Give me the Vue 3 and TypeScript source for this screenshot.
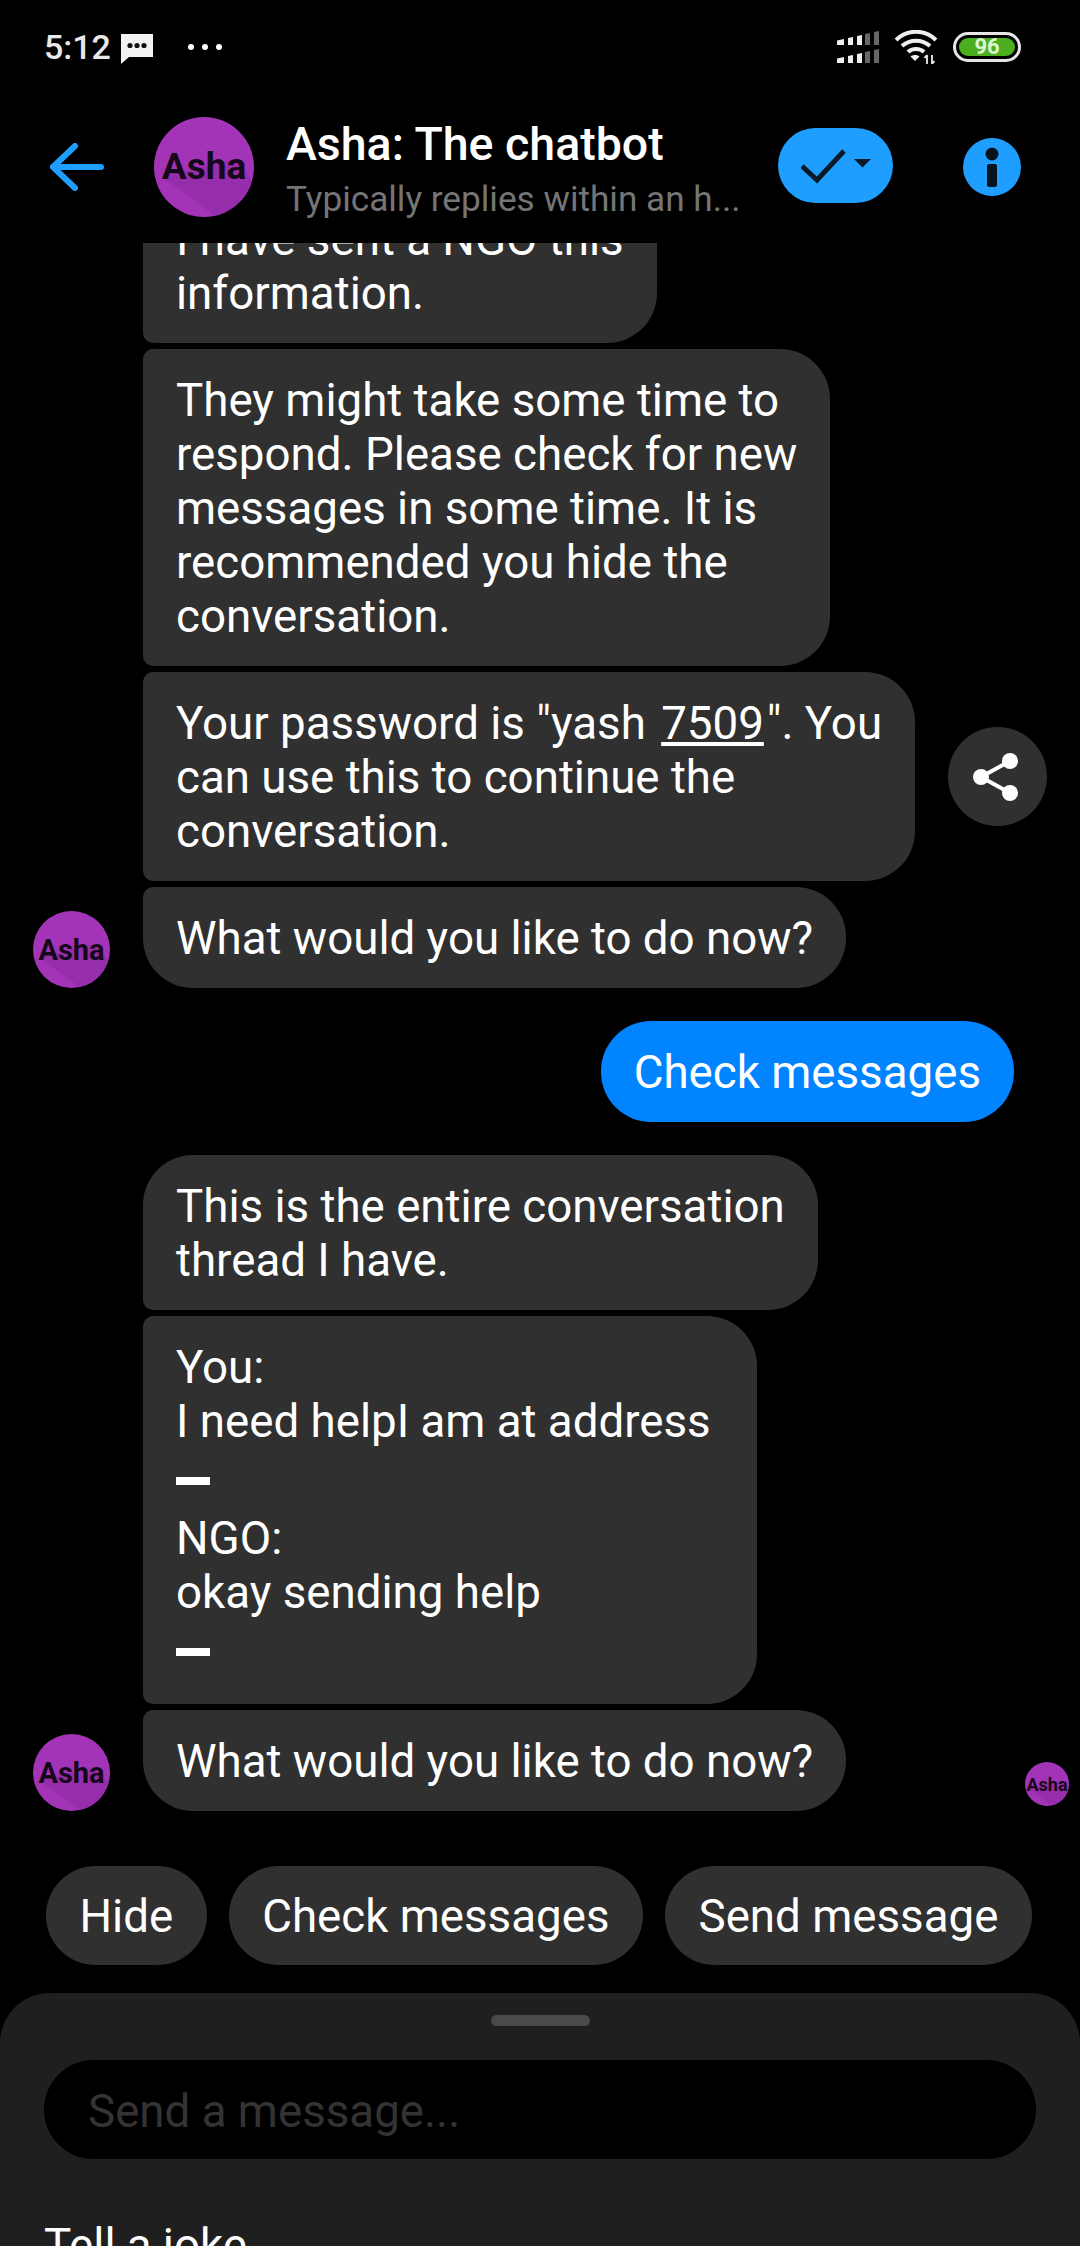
<template>
  <div class="phone">
    <div class="status-bar">
      <div class="status-left">
        <span class="time">5:12</span>
        <svg class="sms" width="34" height="31" viewBox="0 0 34 31">
          <path d="M1 1h32v23H9l-8 7z" fill="#f2f2f2" />
          <circle cx="10" cy="12.5" r="2.6" fill="#111" />
          <circle cx="17" cy="12.5" r="2.6" fill="#111" />
          <circle cx="24" cy="12.5" r="2.6" fill="#111" />
        </svg>
        <span class="more"><i></i><i></i><i></i></span>
      </div>
      <div class="status-right">
        <svg width="42" height="32" viewBox="0 0 42 32">
          <g v-for="row in [0, 18]" :key="row" :transform="`translate(0 ${row})`">
            <path d="M0 9.5l7-1.500V14H0z" fill="#eee" />
            <path d="M11 7l5-1v8h-5z" fill="#eee" />
            <path d="M20 5l5-1v10h-5z" fill="#eee" />
            <path d="M28 3l5-1v12h-5z" fill="#666" />
            <path d="M37 1l5-1v14h-5z" fill="#666" />
          </g>
        </svg>
        <svg class="wifi" width="44" height="34" viewBox="0 0 44 34" fill="none" stroke="#eee" stroke-width="4">
          <path d="M2 10c11-11 29-11 40 0" />
          <path d="M8 16c8-7 20-7 28 0" />
          <path d="M14 22c4-4 12-4 16 0" />
          <path d="M21 31l-4.500-4.500c2.500-2 6.500-2 9 0z" fill="#eee" stroke="none" />
          <path d="M33 25v9M30.500 28l2.500-3M38 34v-9M40.500 31L38 34" stroke-width="1.800" />
        </svg>
        <div class="battery"><span>96</span></div>
      </div>
    </div>

    <header class="top-bar">
      <svg class="back" width="54" height="48" viewBox="0 0 54 48" fill="none" stroke="#1e9fff" stroke-width="6" stroke-linecap="round" stroke-linejoin="round">
        <path d="M25 3L3 24l22 21M3 24h48" />
      </svg>
      <div class="avatar large"><span>Asha</span></div>
      <div class="titles">
        <div class="title">Asha: The chatbot</div>
        <div class="subtitle">Typically replies within an h...</div>
      </div>
      <div class="check-pill">
        <svg width="70" height="36" viewBox="0 0 70 36" fill="none">
          <path d="M1 18l15 14L43 3" stroke="#0b1a26" stroke-width="5" />
          <path d="M53 11h17l-8.500 8.500z" fill="#0b1a26" />
        </svg>
      </div>
      <svg class="info" width="58" height="58" viewBox="0 0 58 58">
        <circle cx="29" cy="29" r="29" fill="#1e9fff" />
        <circle cx="29" cy="16" r="6.500" fill="#06131d" />
        <rect x="24" y="26" width="10" height="23" rx="2" fill="#06131d" />
      </svg>
    </header>

    <div class="messages">
      <div
        v-for="msg in messages"
        :key="msg.id"
        class="row"
        :class="[msg.mine ? 'mine' : '', msg.gap ? 'gap' : '']"
      >
        <div v-if="msg.avatar" class="avatar medium"><span>Asha</span></div>
        <div
          class="bubble"
          :class="[msg.pos, msg.mine ? 'blue' : '']"
        >
          <template v-for="(part, i) in msg.parts" :key="i">
            <u v-if="part.link">{{ part.text }}</u>
            <b v-else-if="part.dash" class="dash"></b>
            <template v-else>{{ part.text }}</template>
          </template>
        </div>
        <div v-if="msg.share" class="share">
          <svg width="50" height="50" viewBox="0 0 50 50" fill="none">
            <path d="M37 9L8 25l29 16" stroke="#fff" stroke-width="4" />
            <circle cx="37" cy="9" r="8" fill="#fff" />
            <circle cx="8" cy="25" r="8" fill="#fff" />
            <circle cx="37" cy="41" r="8" fill="#fff" />
          </svg>
        </div>
        <div v-if="msg.seen" class="avatar small"><span>Asha</span></div>
      </div>
    </div>

    <div class="quick-replies">
      <div v-for="q in quickReplies" :key="q" class="chip">{{ q }}</div>
    </div>

    <div class="sheet">
      <div class="handle"></div>
      <div class="input">Send a message...</div>
      <div class="suggestion">Tell a joke</div>
    </div>
  </div>
</template>

<script setup lang="ts">
interface Part {
  text?: string
  link?: boolean
  dash?: boolean
}

interface Message {
  id: number
  parts: Part[]
  pos?: string
  mine?: boolean
  gap?: boolean
  avatar?: boolean
  share?: boolean
  seen?: boolean
}

const messages: Message[] = [
  { id: 1, pos: 'mid', parts: [{ text: 'I have sent a NGO this\ninformation.' }] },
  {
    id: 2,
    pos: 'mid',
    parts: [{ text: 'They might take some time to\nrespond. Please check for new\nmessages in some time. It is\nrecommended you hide the\nconversation.' }]
  },
  {
    id: 3,
    pos: 'mid',
    share: true,
    parts: [
      { text: 'Your password is "yash ' },
      { text: '7509', link: true },
      { text: '". You\ncan use this to continue the\nconversation.' }
    ]
  },
  { id: 4, pos: 'last', avatar: true, parts: [{ text: 'What would you like to do now?' }] },
  { id: 5, mine: true, gap: true, parts: [{ text: 'Check messages' }] },
  { id: 6, pos: 'first', gap: true, parts: [{ text: 'This is the entire conversation\nthread I have.' }] },
  {
    id: 7,
    pos: 'mid thread',
    parts: [
      { text: 'You:\nI need helpI am at address\n' },
      { dash: true },
      { text: 'NGO:\nokay sending help\n' },
      { dash: true }
    ]
  },
  { id: 8, pos: 'last', avatar: true, seen: true, parts: [{ text: 'What would you like to do now?' }] }
]

const quickReplies = ['Hide', 'Check messages', 'Send message']
</script>

<style>
html,
body {
  margin: 0;
  background: #000;
}
</style>

<style scoped>
.phone {
  width: 1080px;
  height: 2246px;
  overflow: hidden;
  display: flex;
  flex-direction: column;
  background: #000;
  color: #fff;
  font-family: Roboto, "Noto Sans", sans-serif;
}

.status-bar {
  height: 90px;
  flex: none;
  display: flex;
  justify-content: space-between;
  align-items: center;
  padding: 4px 59px 0 44px;
  box-sizing: border-box;
}

.status-left,
.status-right {
  display: flex;
  align-items: center;
}

.time {
  font-size: 34px;
  font-weight: 500;
  color: #e8e8e8;
}

.sms {
  margin-left: 9px;
  margin-top: 3px;
}

.more {
  display: flex;
  gap: 8px;
  margin-left: 34px;
}

.more i {
  width: 6px;
  height: 6px;
  border-radius: 50%;
  background: #fff;
}

.wifi {
  margin-left: 15px;
}

.battery {
  width: 68px;
  height: 30px;
  margin-left: 15px;
  box-sizing: border-box;
  border: 3px solid #e6e6e6;
  border-radius: 15px;
  padding: 3px;
  display: flex;
}

.battery span {
  flex: 1;
  border-radius: 9px;
  background: #4caf1f;
  color: #dcf7cf;
  font-size: 22px;
  font-weight: 700;
  line-height: 18px;
  text-align: center;
}

.top-bar {
  height: 153px;
  flex: none;
  display: flex;
  align-items: center;
  padding: 0 59px 0 50px;
  box-sizing: border-box;
  background: #000;
}

.back {
  flex: none;
  margin-right: 50px;
}

.titles {
  flex: 1;
  margin-left: 32px;
  padding-top: 7px;
  min-width: 0;
}

.title {
  font-size: 46.5px;
  font-weight: 500;
  line-height: 54px;
}

.subtitle {
  margin-top: 3px;
  font-size: 35.2px;
  line-height: 50px;
  color: #757575;
  white-space: nowrap;
}

.check-pill {
  width: 115px;
  height: 75px;
  border-radius: 38px;
  background: #1e9fff;
  display: flex;
  align-items: center;
  justify-content: center;
  margin-right: 70px;
  margin-bottom: 2px;
}

.info {
  flex: none;
}

.avatar {
  flex: none;
  position: relative;
  overflow: hidden;
  border-radius: 50%;
  background: #a334b8;
  display: flex;
  align-items: center;
  justify-content: center;
  color: #16081b;
  font-weight: 700;
}

.avatar::before {
  content: "";
  position: absolute;
  inset: 0;
  background: #962dab;
  clip-path: polygon(8% 60%, 84% 42%, 100% 70%, 100% 100%, 62% 100%);
}

.avatar span {
  position: relative;
}

.avatar.large {
  width: 100px;
  height: 100px;
  font-size: 37px;
}

.avatar.medium {
  width: 77px;
  height: 77px;
  font-size: 29px;
  margin-right: 33px;
  align-self: flex-end;
}

.avatar.small {
  width: 44px;
  height: 44px;
  font-size: 18px;
  margin-left: auto;
  margin-right: 11px;
  align-self: flex-end;
  margin-bottom: 5px;
}

.messages {
  flex: 1;
  min-height: 0;
  overflow: hidden;
  display: flex;
  flex-direction: column;
  justify-content: flex-end;
  gap: 6px;
}

.row {
  flex: none;
  display: flex;
  align-items: center;
  padding-left: 143px;
}

.row:has(> .avatar.medium) {
  padding-left: 33px;
}

.row.mine {
  justify-content: flex-end;
  padding-right: 66px;
}

.row.gap {
  margin-top: 27px;
}

.row.mine.gap {
  margin-top: 27px;
}

.bubble {
  padding: 25px 33px 22px;
  border-radius: 50px;
  background: #303030;
  font-size: 45.7px;
  line-height: 54px;
  white-space: pre-line;
}

.bubble u {
  margin: 0 3px 0 4px;
}

.bubble.first {
  border-bottom-left-radius: 10px;
}

.bubble.mid {
  border-top-left-radius: 10px;
  border-bottom-left-radius: 10px;
}

.bubble.last {
  border-top-left-radius: 10px;
}

.bubble.thread {
  padding-right: 46px;
}

.bubble.blue {
  background: #0084ff;
}

.dash {
  display: block;
  width: 34px;
  height: 8px;
  margin: 28px 0 27px;
  background: #fff;
}

.dash:last-child {
  margin-bottom: 26px;
}

.share {
  width: 99px;
  height: 99px;
  margin-left: 33px;
  border-radius: 50%;
  background: #303030;
  display: flex;
  align-items: center;
  justify-content: center;
}

.quick-replies {
  flex: none;
  display: flex;
  gap: 22px;
  padding: 55px 46px 28px;
}

.chip {
  height: 99px;
  padding: 0 33.5px;
  border-radius: 50px;
  background: #303030;
  font-size: 45.7px;
  line-height: 101px;
  white-space: nowrap;
}

.sheet {
  flex: none;
  height: 253px;
  overflow: hidden;
  box-sizing: border-box;
  padding: 22px 44px 0;
  border-radius: 50px 50px 0 0;
  background: #1f1f1f;
}

.handle {
  width: 99px;
  height: 11px;
  margin: 0 auto 34px;
  border-radius: 6px;
  background: #4a4a4a;
}

.input {
  height: 99px;
  padding: 0 44px;
  border-radius: 50px;
  background: #000;
  color: #333;
  font-size: 45.7px;
  line-height: 103px;
}

.suggestion {
  margin-top: 60px;
  font-size: 45.7px;
  line-height: 54px;
}
</style>
